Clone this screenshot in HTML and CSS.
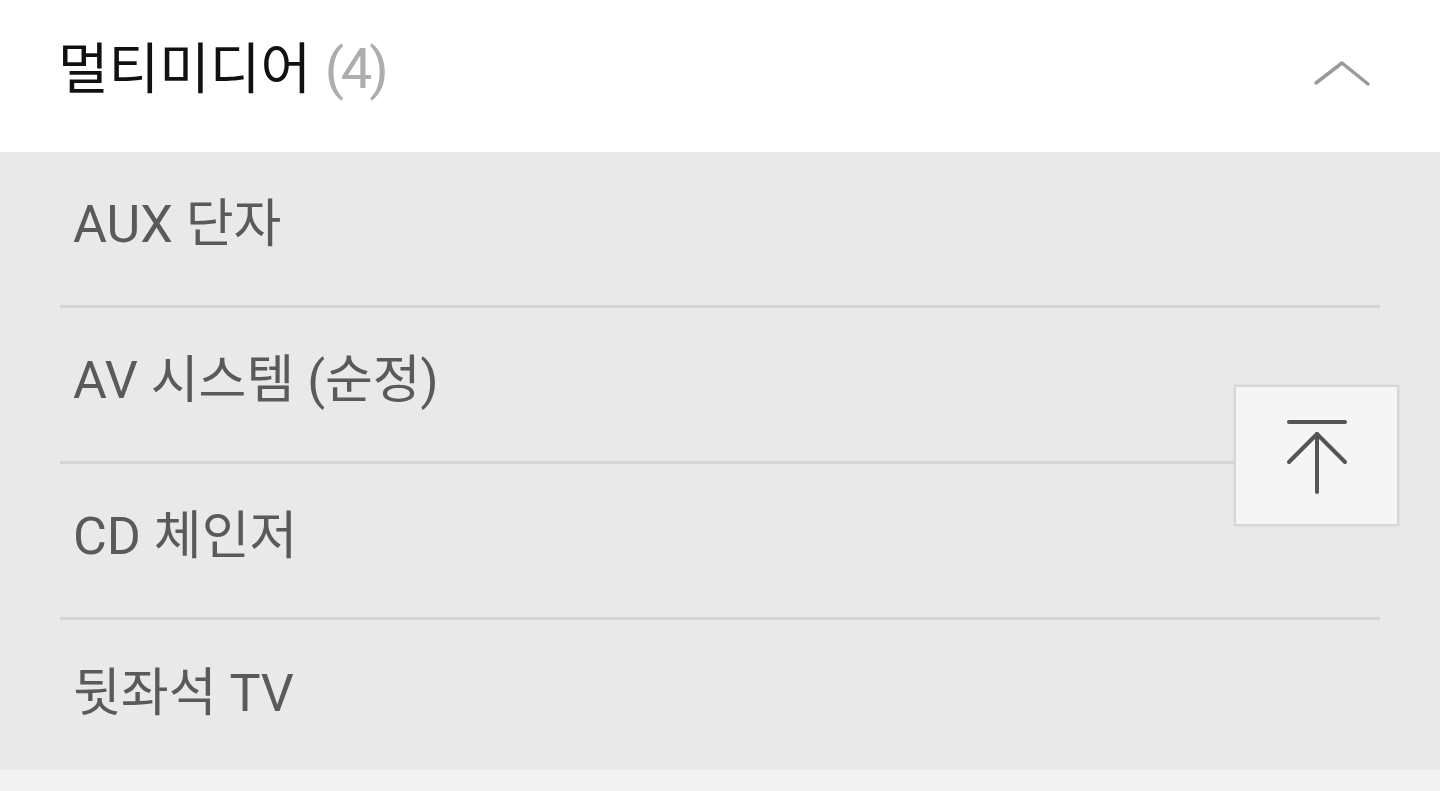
FILE: index.html
```html
<!DOCTYPE html>
<html lang="ko">
<head>
<meta charset="utf-8">
<link rel="stylesheet" href="styles.css">
</head>
<body>
<section class="group">
  <header class="group-head">
    <h2 class="group-title">멀티미디어 <span class="count">(4)</span></h2>
    <svg class="chevron" width="60" height="32" viewBox="0 0 60 32">
      <polyline points="4,26 30,6 56,27" fill="none" stroke="#9a9a9a" stroke-width="3.5" stroke-linecap="round" stroke-linejoin="round"/>
    </svg>
  </header>
  <ul class="items">
    <li class="item">AUX 단자</li>
    <li class="item">AV 시스템 (순정)</li>
    <li class="item">CD 체인저</li>
    <li class="item">뒷좌석 TV</li>
  </ul>
</section>
<div class="footer-strip"></div>
<button class="to-top" type="button" aria-label="맨 위로">
  <svg width="64" height="80" viewBox="0 0 64 80">
    <line x1="4" y1="4" x2="60" y2="4" stroke="#555" stroke-width="4" stroke-linecap="round"/>
    <polyline points="4,44 32,16 60,44" fill="none" stroke="#555" stroke-width="4" stroke-linecap="round" stroke-linejoin="round"/>
    <line x1="32" y1="16" x2="32" y2="74" stroke="#555" stroke-width="4" stroke-linecap="round"/>
  </svg>
</button>
</body>
</html>
```

FILE: styles.css
```css
html, body {
  margin: 0;
  padding: 0;
}
body {
  width: 1440px;
  height: 791px;
  overflow: hidden;
  background: #f2f2f2;
  font-family: Roboto, "Noto Sans CJK KR", sans-serif;
}
.group-head {
  height: 152px;
  background: #ffffff;
  display: flex;
  align-items: center;
  justify-content: space-between;
  padding: 0 68px 0 58px;
  box-sizing: border-box;
}
.group-title {
  margin: 0 0 14px 0;
  font-weight: 400;
  font-size: 55px;
  color: #111111;
  line-height: 1;
}
.count {
  color: #adadad;
  font-size: 56px;
  letter-spacing: -3px;
}
.chevron {
  display: block;
  margin-top: -6px;
}
.items {
  list-style: none;
  margin: 0;
  padding: 0;
  background: #e9e9e9;
}
.item {
  margin: 0 60px;
  padding-left: 13px;
  border-bottom: 3px solid #d5d5d5;
  display: flex;
  align-items: center;
  padding-bottom: 18px;
  box-sizing: border-box;
  height: 156px;
  font-size: 52px;
  color: #5a5a5a;
}
.item:last-child {
  border-bottom: none;
  height: 150px;
  padding-bottom: 14px;
}
.footer-strip {
  height: 22px;
  background: #f2f2f2;
}
.to-top {
  position: absolute;
  left: 1234px;
  top: 385px;
  width: 165px;
  height: 141px;
  box-sizing: border-box;
  background: #f5f5f5;
  border: 2px solid #d6d6d6;
  box-shadow: 0 0 2px rgba(0,0,0,0.1);
  padding: 0;
  display: flex;
  align-items: center;
  justify-content: center;
}
.to-top svg {
  display: block;
  margin-top: 4px;
}
```
